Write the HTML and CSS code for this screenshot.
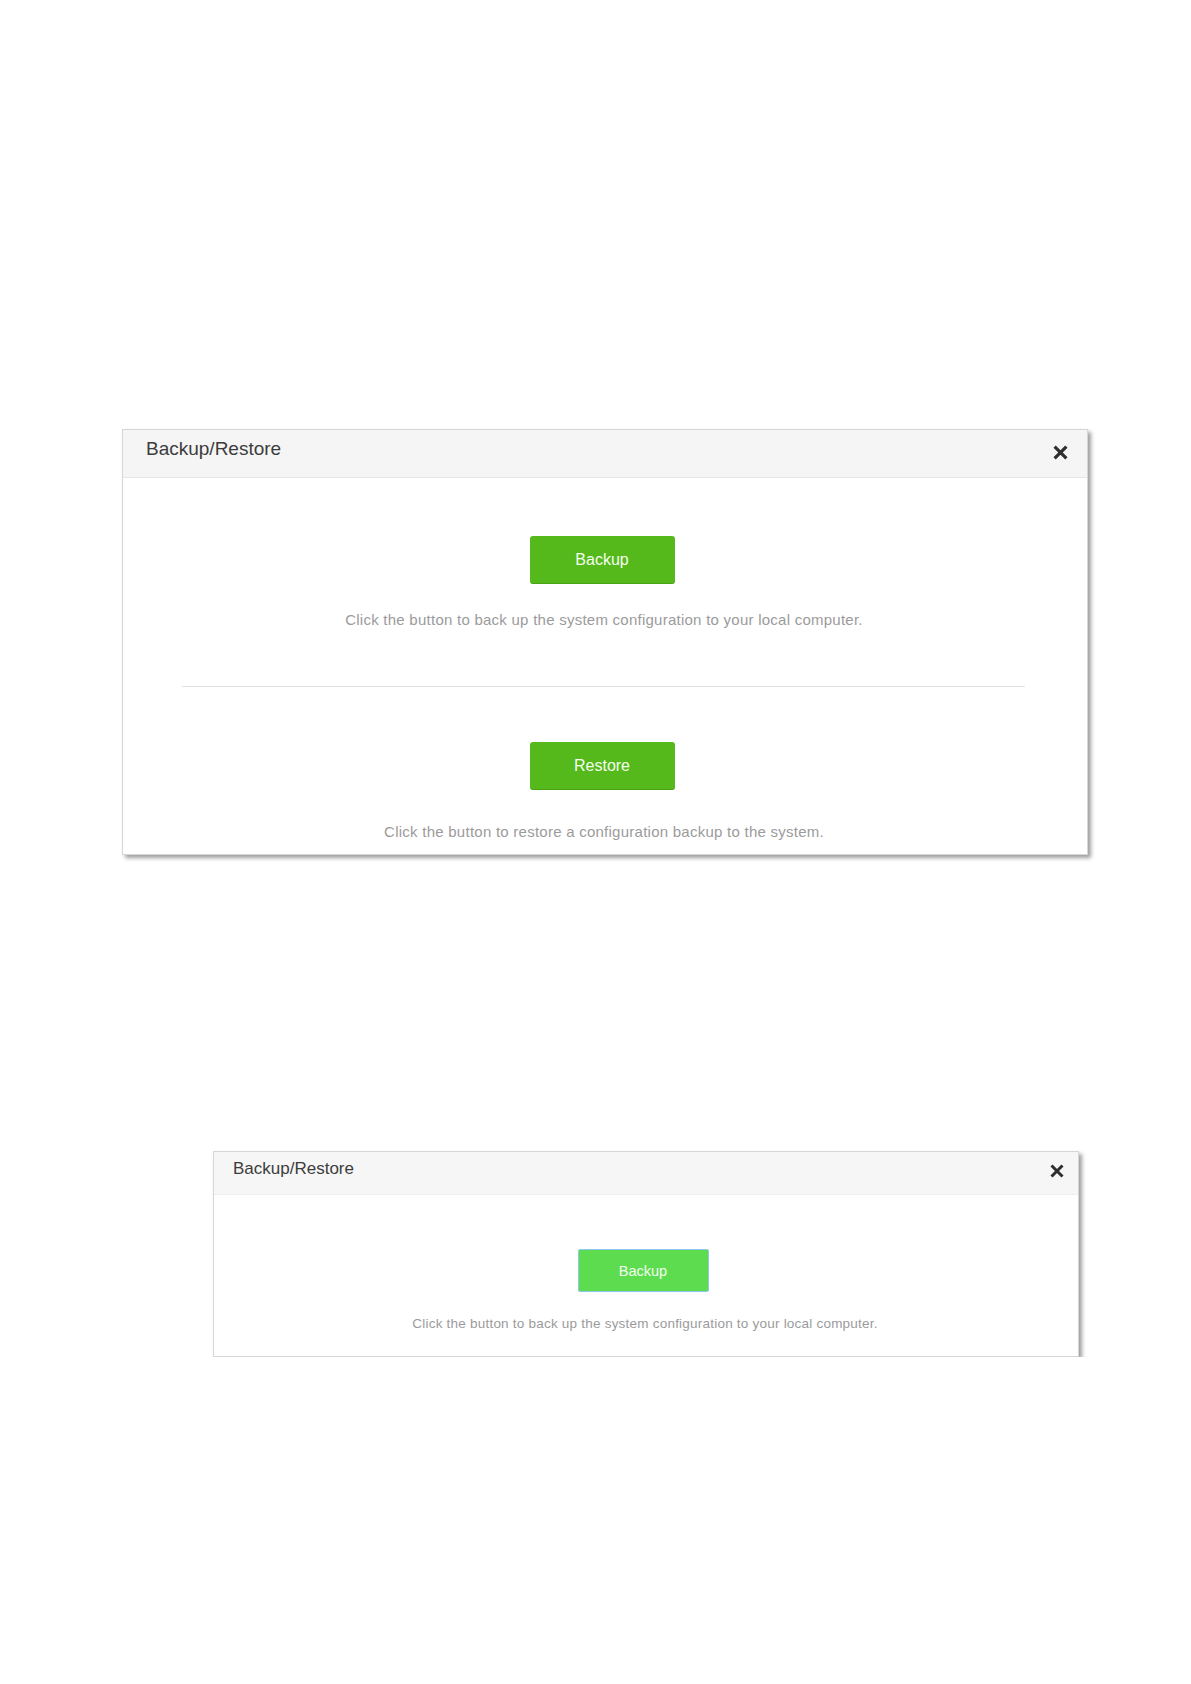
FILE: index.html
```html
<!DOCTYPE html>
<html lang="en">
<head>
  <meta charset="UTF-8">
  <title>Backup/Restore</title>
  <link rel="stylesheet" href="styles.css">
</head>
<body>
  <main class="page">
    <!-- full dialog: backup and restore -->
    <section class="dialog dialog-full">
      <header class="dialog-head">
        <h2 class="dialog-title">Backup/Restore</h2>
        <button class="dialog-close" type="button" aria-label="Close">
          <svg viewBox="0 0 14 14" width="15" height="15">
            <path d="M1.5 1.5 L12.5 12.5 M12.5 1.5 L1.5 12.5" />
          </svg>
        </button>
      </header>
      <div class="dialog-body">
        <div class="action">
          <button class="btn" type="button">Backup</button>
          <p class="hint">Click the button to back up the system configuration to your local computer.</p>
        </div>
        <hr class="divider">
        <div class="action action-last">
          <button class="btn" type="button">Restore</button>
          <p class="hint">Click the button to restore a configuration backup to the system.</p>
        </div>
      </div>
    </section>

    <!-- compact dialog: backup only, button focused -->
    <section class="dialog dialog-compact">
      <header class="dialog-head">
        <h2 class="dialog-title">Backup/Restore</h2>
        <button class="dialog-close" type="button" aria-label="Close">
          <svg viewBox="0 0 14 14" width="14" height="14">
            <path d="M1.5 1.5 L12.5 12.5 M12.5 1.5 L1.5 12.5" />
          </svg>
        </button>
      </header>
      <div class="dialog-body">
        <div class="action">
          <button class="btn btn-focus" type="button">Backup</button>
          <p class="hint">Click the button to back up the system configuration to your local computer.</p>
        </div>
      </div>
    </section>
  </main>
</body>
</html>
```

FILE: styles.css
```css
body {
  margin: 0;
  background: #ffffff;
  font-family: 'Liberation Sans', Arial, sans-serif;
}
.page {
  display: flex;
  flex-direction: column;
  align-items: flex-start;
  padding-top: 429px;
}
.dialog {
  box-sizing: border-box;
  background: #ffffff;
  border: 1px solid #d6d6d6;
  box-shadow: 3px 3px 4px rgba(0, 0, 0, 0.38);
}
.dialog-head {
  display: flex;
  justify-content: space-between;
  align-items: flex-start;
  background: #f5f5f5;
  border-bottom: 1px solid #e6e6e6;
}
.dialog-title {
  margin: 0;
  font-weight: normal;
  color: #3c3c3c;
}
.dialog-close {
  display: flex;
  padding: 0;
  border: none;
  background: none;
  cursor: pointer;
}
.dialog-close path {
  fill: none;
  stroke: #2e2e2e;
  stroke-width: 3;
}
.dialog-body {
  display: flex;
  flex-direction: column;
}
.action {
  display: flex;
  flex-direction: column;
  align-items: center;
}
.btn {
  box-sizing: border-box;
  font-family: 'Liberation Sans', Arial, sans-serif;
  color: #f4fff0;
  background: #55b91b;
  border: none;
  border-bottom: 1px solid #4aa315;
  border-radius: 3px;
  cursor: pointer;
}
.hint {
  margin: 0;
  color: #9b9b9b;
}
.divider {
  height: 1px;
  margin: 56px 62px 55px 59px;
  border: none;
  background: #e3e3e3;
}

/* first dialog */
.dialog-full {
  width: 966px;
  margin-left: 122px;
}
.dialog-full .dialog-head {
  height: 48px;
  padding: 8px 19px 0 23px;
  box-sizing: border-box;
}
.dialog-full .dialog-title {
  font-size: 19px;
  line-height: 22px;
}
.dialog-full .dialog-close {
  margin-top: 7px;
}
.dialog-full .dialog-body {
  padding: 58px 0 12px;
}
.dialog-full .btn {
  width: 145px;
  height: 48px;
  margin-right: 6px;
  font-size: 16px;
}
.dialog-full .hint {
  margin-top: 26px;
  margin-right: 2px;
  font-size: 15px;
  line-height: 20px;
  letter-spacing: 0.25px;
}
.dialog-full .action-last .hint {
  margin-top: 32px;
}

/* second dialog, drawn at a smaller scale */
.dialog-compact {
  width: 866px;
  margin-top: 296px;
  margin-left: 213px;
}
.dialog-compact .dialog-head {
  height: 43px;
  padding: 7px 14px 0 19px;
  box-sizing: border-box;
  background: #f6f6f6;
  border-bottom-color: #efefef;
}
.dialog-compact .dialog-title {
  font-size: 17px;
  line-height: 20px;
}
.dialog-compact .dialog-close {
  margin-top: 5px;
}
.dialog-compact .dialog-body {
  padding: 54px 0 23px;
}
.dialog-compact .btn {
  width: 131px;
  height: 43px;
  margin-right: 6px;
  font-size: 14.5px;
}
.dialog-compact .hint {
  margin-top: 23px;
  margin-right: 2px;
  font-size: 13.5px;
  line-height: 18px;
  letter-spacing: 0.22px;
}
.btn-focus {
  background: #5ddc4f;
  border: 1px solid #8cc8ea;
  border-radius: 2px;
}
```
